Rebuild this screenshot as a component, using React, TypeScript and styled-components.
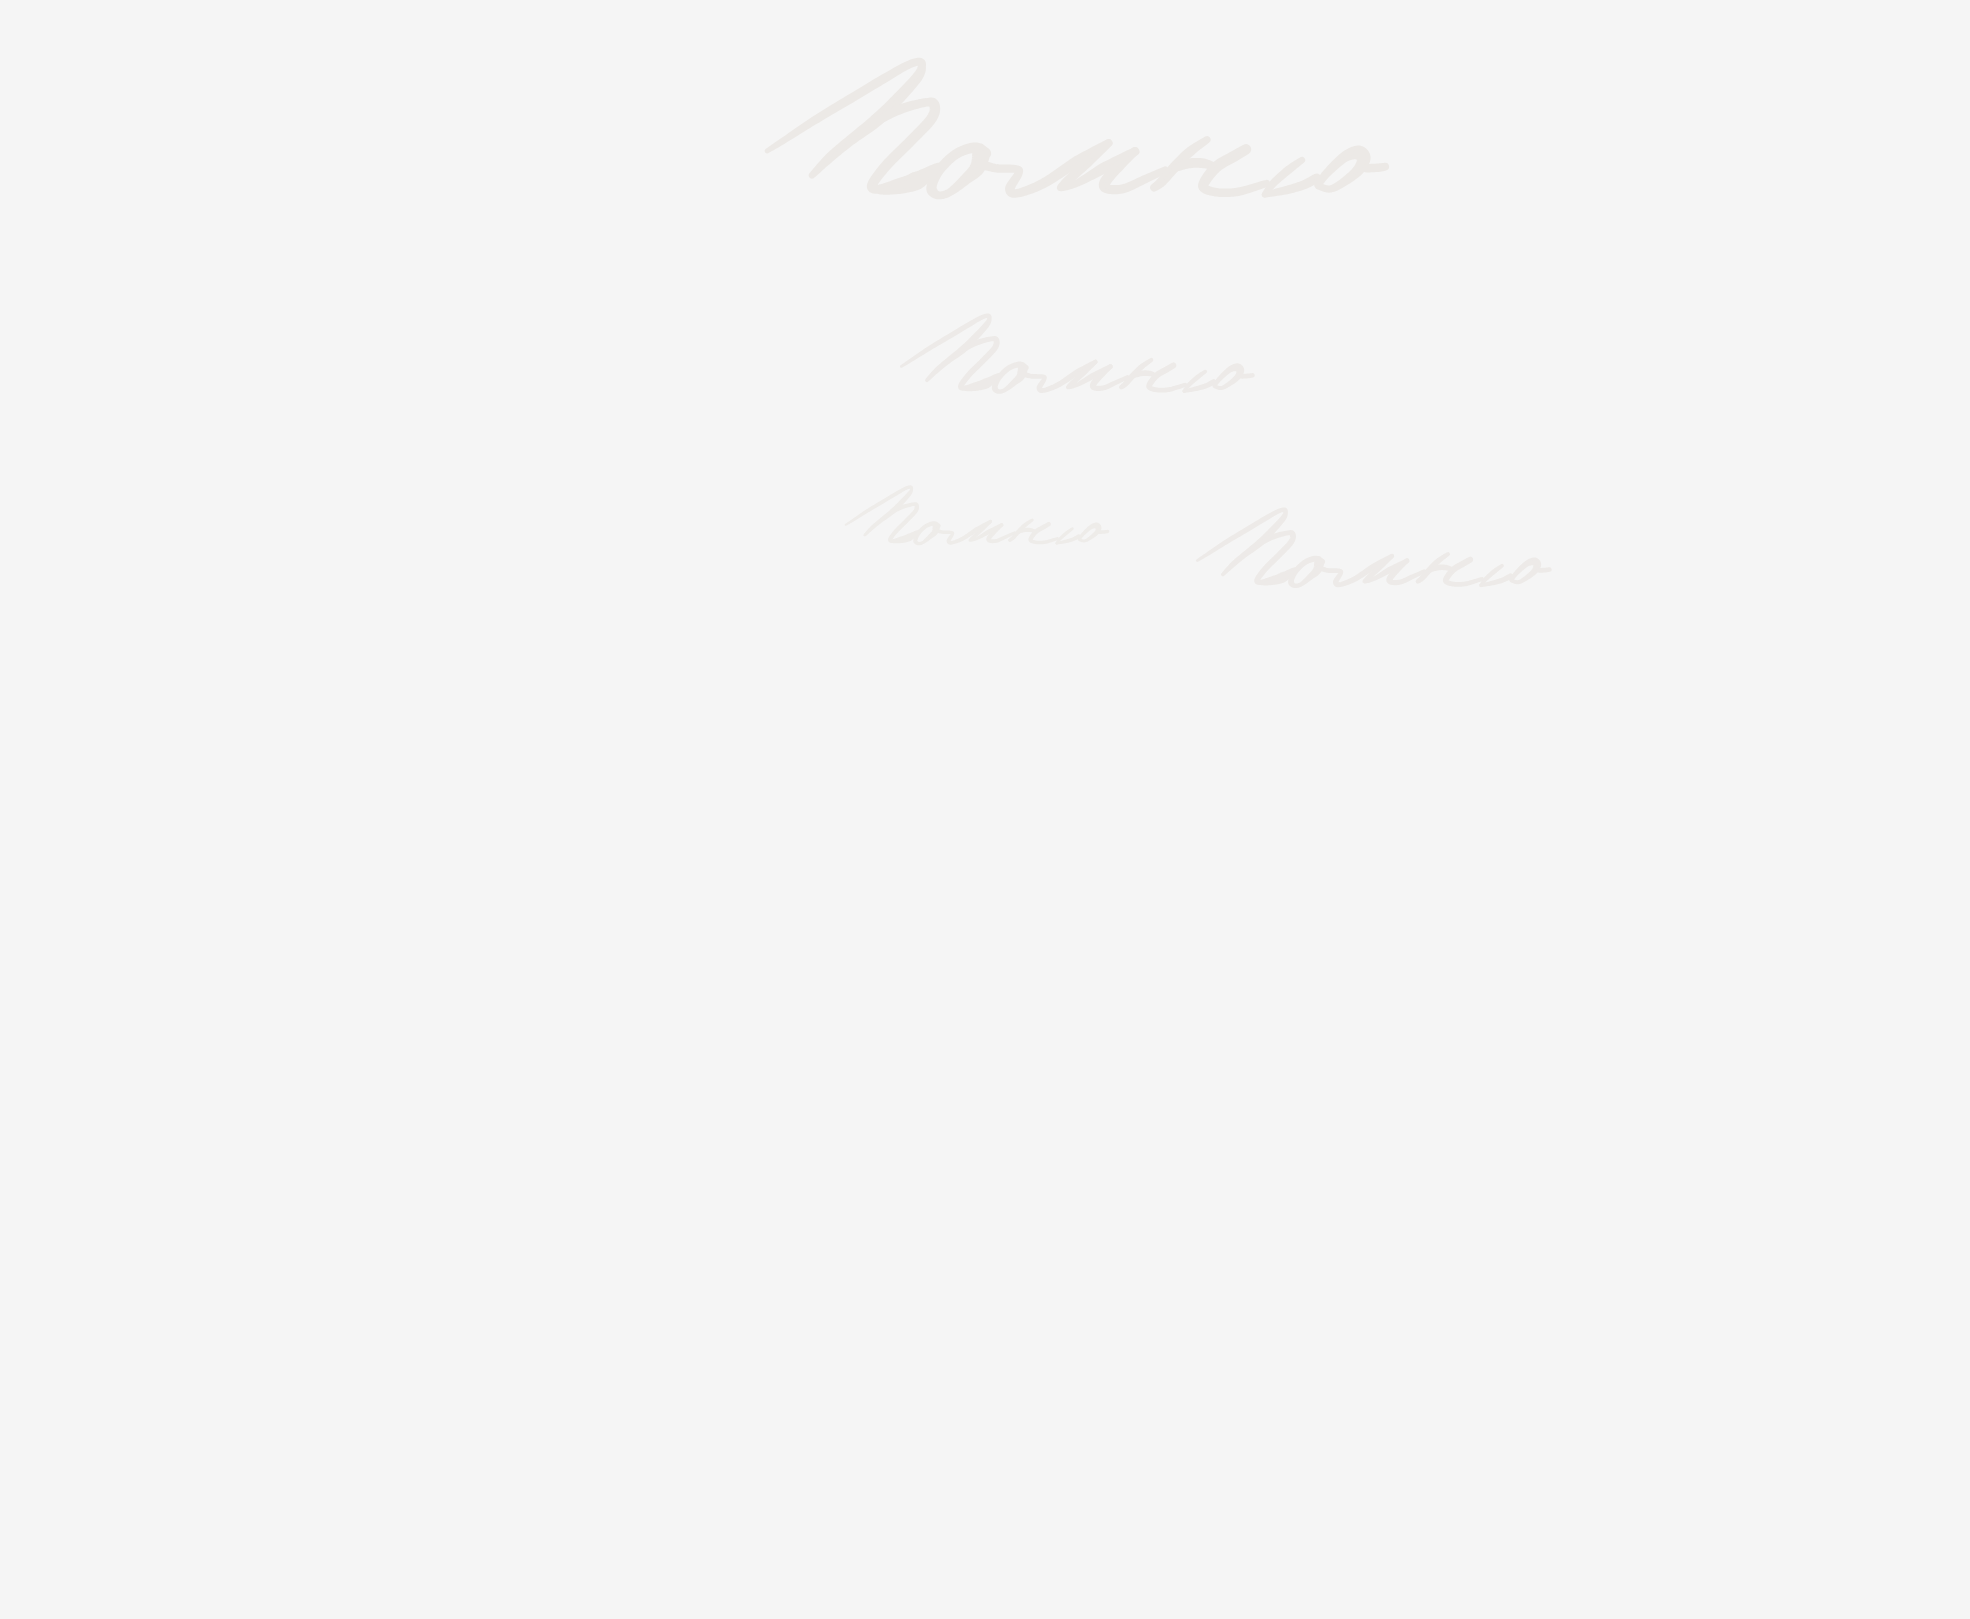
import React from 'react';
import styled, { createGlobalStyle } from 'styled-components';

const GlobalStyle = createGlobalStyle`
  html, body {
    margin: 0;
    background-color: #f5f5f5;
  }
`;

const Page = styled.div`
  display: flex;
  flex-direction: column;
  min-height: 100vh;
  box-sizing: border-box;
  padding-top: 57px;
  background-color: #f5f5f5;
`;

const Row = styled.div<{ $indent: number; $top?: number }>`
  display: flex;
  align-items: flex-start;
  gap: 84px;
  padding-left: ${(p) => p.$indent}px;
  margin-top: ${(p) => p.$top ?? 0}px;
`;

const Mark = styled.svg<{ $width: number; $fade: number; $drop?: number }>`
  display: block;
  flex: none;
  width: ${(p) => p.$width}px;
  height: auto;
  overflow: visible;
  margin-top: ${(p) => p.$drop ?? 0}px;
  fill: #ece9e6;
  stroke: #ece9e6;
  stroke-width: 4.5px;
  stroke-linejoin: round;
  opacity: ${(p) => p.$fade};
`;

type Point = [number, number, number];

// points were read off 3x crops, so each stroke keeps the crop's origin
const traced = (ox: number, oy: number, points: Point[]): Point[] =>
  points.map(([x, y, w]) => [ox + x / 3, oy + y / 3, w / 3]);

const STROKES: Point[][] = [
  traced(750, 50, [
    [51, 303, 1], [100, 272, 6], [200, 207, 12], [300, 147, 14], [400, 87, 14], [470, 47, 11],
    [508, 35, 10], [516, 48, 10], [503, 80, 18], [450, 140, 22], [380, 210, 26], [300, 272, 18],
    [240, 322, 16], [186, 376, 6],
  ]),
  traced(750, 50, [
    [380, 215, 10], [450, 178, 16], [530, 157, 12], [553, 165, 18], [545, 205, 18], [480, 275, 18],
    [410, 345, 18], [366, 405, 16], [385, 418, 14], [440, 410, 32], [500, 392, 42], [564, 352, 14],
  ]),
  // first o and its tail
  traced(900, 125, [
    [256, 85, 22], [225, 68, 18], [170, 86, 16], [122, 130, 16], [99, 170, 16], [96, 197, 18], [118, 211, 10],
    [152, 200, 10], [198, 162, 20], [231, 130, 32], [243, 90, 40], [240, 70, 18],
  ]),
  traced(960, 120, [
    [60, 132, 14], [110, 145, 12], [168, 147, 10], [176, 160, 10], [150, 205, 16], [170, 220, 12],
    [250, 190, 16], [350, 125, 20], [446, 69, 10],
  ]),
  traced(960, 120, [[446, 69, 10], [380, 130, 16], [320, 185, 14], [301, 205, 3], [350, 190, 8], [430, 145, 20], [526, 94, 12]]),
  traced(1100, 120, [
    [104, 94, 12], [60, 135, 18], [16, 185, 20], [20, 206, 14], [70, 206, 14], [130, 180, 12], [195, 150, 8],
  ]),
  traced(1100, 120, [[162, 203, 10], [185, 185, 16], [225, 140, 18], [270, 95, 16], [321, 59, 8]]),
  traced(1100, 120, [[225, 145, 8], [270, 130, 16], [310, 130, 16], [345, 140, 8]]),
  traced(1170, 120, [
    [228, 88, 18], [190, 110, 20], [140, 140, 20], [104, 185, 18], [104, 206, 14], [150, 218, 12],
    [210, 214, 12], [290, 190, 8],
  ]),
  traced(1170, 120, [[284, 224, 4], [310, 190, 10], [355, 150, 12], [396, 120, 6]]),
  traced(1170, 120, [[284, 224, 4], [350, 210, 12], [400, 195, 14], [440, 175, 16]]),
  // second o
  traced(1170, 120, [
    [444, 195, 8], [470, 160, 12], [525, 110, 18], [565, 98, 30], [581, 115, 28], [565, 150, 20],
    [520, 187, 12], [480, 207, 8], [446, 198, 8],
  ]),
  traced(1170, 120, [[590, 145, 12], [625, 143, 12], [646, 140, 10]]),
];

// catmull-rom through the points, the width eased between them
const sample = (points: Point[]): Point[] => {
  const out: Point[] = [];
  const at = (i: number) => points[Math.max(0, Math.min(points.length - 1, i))];
  for (let i = 0; i < points.length - 1; i++) {
    const [a, b, c, d] = [at(i - 1), at(i), at(i + 1), at(i + 2)];
    for (let s = 0; s < 12; s++) {
      const t = s / 12;
      const curve = (k: number) =>
        0.5 * (2 * b[k] + (c[k] - a[k]) * t + (2 * a[k] - 5 * b[k] + 4 * c[k] - d[k]) * t * t + (3 * b[k] - a[k] - 3 * c[k] + d[k]) * t * t * t);
      out.push([curve(0), curve(1), b[2] + (c[2] - b[2]) * t]);
    }
  }
  out.push(points[points.length - 1]);
  return out;
};

const ribbon = (points: Point[]): string => {
  const line = sample(points);
  const left: string[] = [];
  const right: string[] = [];
  line.forEach(([x, y, w], i) => {
    const prev = line[Math.max(0, i - 1)];
    const next = line[Math.min(line.length - 1, i + 1)];
    const dx = next[0] - prev[0];
    const dy = next[1] - prev[1];
    const len = Math.hypot(dx, dy) || 1;
    const nx = (-dy / len) * (w / 2);
    const ny = (dx / len) * (w / 2);
    left.push(`${(x + nx).toFixed(2)} ${(y + ny).toFixed(2)}`);
    right.unshift(`${(x - nx).toFixed(2)} ${(y - ny).toFixed(2)}`);
  });
  const endR = (line[line.length - 1][2] / 2).toFixed(2);
  const startR = (line[0][2] / 2).toFixed(2);
  return `M${left.join('L')}A${endR} ${endR} 0 0 0 ${right[0]}L${right.join('L')}A${startR} ${startR} 0 0 0 ${left[0]}Z`;
};

const SIGNATURE = STROKES.map(ribbon);

const Signature = ({ width, fade, drop }: { width: number; fade: number; drop?: number }) => (
  <Mark viewBox="763 57 630 142" $width={width} $fade={fade} $drop={drop} role="img">
    {SIGNATURE.map((d) => (
      <path key={d} d={d} />
    ))}
  </Mark>
);

const App = () => {
  return (
    <Page>
      <GlobalStyle />
      <Row $indent={763}>
        <Signature width={630} fade={1} />
      </Row>
      <Row $indent={899} $top={114}>
        <Signature width={358} fade={0.85} />
      </Row>
      <Row $indent={844} $top={91}>
        <Signature width={267} fade={0.75} />
        <Signature width={359} fade={0.85} drop={22} />
      </Row>
    </Page>
  );
};

export default App;
